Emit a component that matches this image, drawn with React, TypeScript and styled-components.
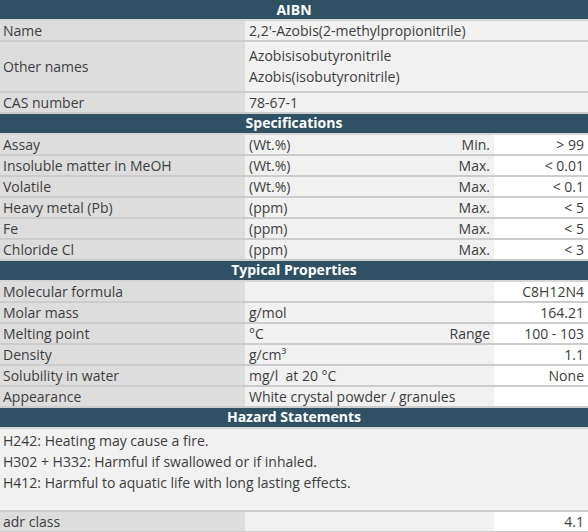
import React from "react";
import styled, { createGlobalStyle } from "styled-components";

const Global = createGlobalStyle`
  html, body { margin: 0; padding: 0; background: #ffffff; }
  body { font-family: "Open Sans", "DejaVu Sans", sans-serif; }
`;

const Sheet = styled.div`
  width: 588px;
  color: #3d3d3d;
  font-size: 14px;
  line-height: 19px;
`;

const Header = styled.div<{ $first?: boolean }>`
  background: #2f5163;
  color: #ffffff;
  font-weight: 700;
  text-align: center;
  height: 19px;
  line-height: ${(p) => (p.$first ? 19 : 18)}px;
  border-bottom: 2px solid #d6d6d6;
`;

const Row = styled.div<{ $cols: string }>`
  display: grid;
  grid-template-columns: ${(p) => p.$cols};
  border-bottom: 2px solid #cccccc;
`;

const Label = styled.div`
  background: #dddddd;
  padding: 0 3px;
  min-height: 19px;
  display: flex;
  align-items: center;
`;

const Cell = styled.div<{ $align?: "left" | "right"; $tone?: "light" | "white"; $span?: number }>`
  background: ${(p) => (p.$tone === "white" ? "#ffffff" : "#f1f1f1")};
  text-align: ${(p) => p.$align ?? "left"};
  padding: 0 4px;
  min-height: 19px;
  grid-column: ${(p) => (p.$span ? `span ${p.$span}` : "auto")};
`;

const Lines = styled.div`
  padding: 3px 0 4px;
  line-height: 21px;
`;

const Hazards = styled.div`
  background: #f1f1f1;
  padding: 1px 3px 17px;
  line-height: 21px;
  border-bottom: 2px solid #cccccc;
`;

const COLS_INFO = "245px 1fr";
const COLS_SPEC = "245px 125px 124px 94px";

type Spec = [string, string, string, string];

const specs: Spec[] = [
  ["Assay", "(Wt.%)", "Min.", "> 99"],
  ["Insoluble matter in MeOH", "(Wt.%)", "Max.", "< 0.01"],
  ["Volatile", "(Wt.%)", "Max.", "< 0.1"],
  ["Heavy metal (Pb)", "(ppm)", "Max.", "< 5"],
  ["Fe", "(ppm)", "Max.", "< 5"],
  ["Chloride Cl", "(ppm)", "Max.", "< 3"],
];

const props: Spec[] = [
  ["Molecular formula", "", "", "C8H12N4"],
  ["Molar mass", "g/mol", "", "164.21"],
  ["Melting point", "°C", "Range", "100 - 103"],
  ["Density", "g/cm³", "", "1.1"],
  ["Solubility in water", "mg/l  at 20 °C", "", "None"],
];

function SpecRow({ row }: { row: Spec }) {
  return (
    <Row $cols={COLS_SPEC}>
      <Label>{row[0]}</Label>
      <Cell style={{ whiteSpace: "pre" }}>{row[1]}</Cell>
      <Cell $align="right">{row[2]}</Cell>
      <Cell $align="right" $tone="white">{row[3]}</Cell>
    </Row>
  );
}

export default function App() {
  return (
    <>
      <Global />
      <Sheet>
        <Header $first>AIBN</Header>
        <Row $cols={COLS_INFO}>
          <Label>Name</Label>
          <Cell>2,2'-Azobis(2-methylpropionitrile)</Cell>
        </Row>
        <Row $cols={COLS_INFO}>
          <Label>Other names</Label>
          <Cell>
            <Lines>
              Azobisisobutyronitrile
              <br />
              Azobis(isobutyronitrile)
            </Lines>
          </Cell>
        </Row>
        <Row $cols={COLS_INFO}>
          <Label>CAS number</Label>
          <Cell>78-67-1</Cell>
        </Row>
        <Header>Specifications</Header>
        {specs.map((s) => (
          <SpecRow key={s[0]} row={s} />
        ))}
        <Header>Typical Properties</Header>
        {props.map((s) => (
          <SpecRow key={s[0]} row={s} />
        ))}
        <Row $cols={COLS_SPEC}>
          <Label>Appearance</Label>
          <Cell $span={2}>White crystal powder / granules</Cell>
          <Cell $tone="white" />
        </Row>
        <Header>Hazard Statements</Header>
        <Hazards>
          H242: Heating may cause a fire.
          <br />
          H302 + H332: Harmful if swallowed or if inhaled.
          <br />
          H412: Harmful to aquatic life with long lasting effects.
        </Hazards>
        <Row $cols={COLS_SPEC}>
          <Label>adr class</Label>
          <Cell $span={2} />
          <Cell $align="right" $tone="white">4.1</Cell>
        </Row>
      </Sheet>
    </>
  );
}
